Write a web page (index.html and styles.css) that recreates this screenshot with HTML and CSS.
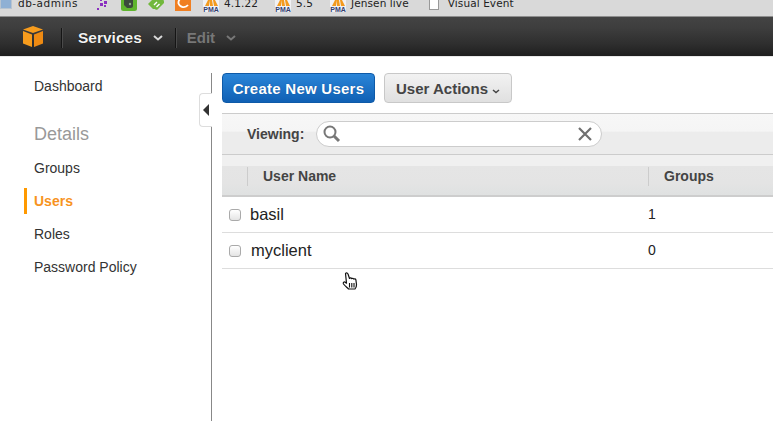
FILE: index.html
```html
<!DOCTYPE html>
<html lang="en">
<head>
<meta charset="utf-8">
<title>Users</title>
<link rel="stylesheet" href="styles.css">
</head>
<body>
<div class="bookmarks">
  <span class="bm-folder"></span><span class="bm bm-db">db-admins</span>
  <svg class="ic ic-dots" width="14" height="10" viewBox="0 0 14 10"><g fill="#8a2fc0"><rect x="0" y="8" width="2" height="2"/><rect x="3" y="3" width="3" height="3"/><rect x="7" y="1" width="3" height="3"/><rect x="3" y="0" width="2" height="1"/><rect x="7" y="5" width="2" height="2"/></g></svg>
  <svg class="ic ic-ever" width="16" height="11" viewBox="0 0 16 11"><rect x="0" y="-3" width="16" height="14" rx="2.500" fill="#5fb52e"/><path d="M3 0h9v5.500a2.500 2.500 0 0 1-2.500 2.500H6L3 5z" fill="#3b4a3c"/><circle cx="9" cy="4" r="1.200" fill="#8fa88c"/></svg>
  <svg class="ic ic-feed" width="16" height="10" viewBox="0 0 16 10"><path d="M0 4 5-1h8a3 3 0 0 1 3 3v1l-6 6a2 2 0 0 1-3 0H5z" fill="#72b83c"/><path d="M6 5l3-3M8.500 7l3-3" stroke="#fff" stroke-width="1.400"/></svg>
  <svg class="ic ic-c" width="16" height="11" viewBox="0 0 16 11"><rect width="16" height="11" fill="#f07f22"/><path d="M13 5a5.500 5.500 0 0 1-9.500-1.500A5.500 5.500 0 0 1 5 -1" fill="none" stroke="#fff" stroke-width="1.800"/></svg>
  <span class="pma pma-1"><svg width="16" height="12" viewBox="0 0 16 12"><rect width="16" height="12" fill="#f1f1f4"/><path d="M2 6 5 0h2L6 6zM7 6V0h2l1 6zM11 6 10 0h2l3 6z" fill="#f39a1e"/><text x="8" y="11.500" class="pma-text">PMA</text></svg><span class="bm">4.1.22</span></span>
  <span class="pma pma-2"><svg width="16" height="12" viewBox="0 0 16 12"><rect width="16" height="12" fill="#f1f1f4"/><path d="M2 6 5 0h2L6 6zM7 6V0h2l1 6zM11 6 10 0h2l3 6z" fill="#f39a1e"/><text x="8" y="11.500" class="pma-text">PMA</text></svg><span class="bm">5.5</span></span>
  <span class="pma pma-3"><svg width="16" height="12" viewBox="0 0 16 12"><rect width="16" height="12" fill="#f1f1f4"/><path d="M2 6 5 0h2L6 6zM7 6V0h2l1 6zM11 6 10 0h2l3 6z" fill="#f39a1e"/><text x="8" y="11.500" class="pma-text">PMA</text></svg><span class="bm">Jensen live</span></span>
  <span class="doc"><span class="doc-page"></span><span class="bm">Visual Event</span></span>
</div>

<nav class="topnav">
  <svg class="logo" width="22" height="22" viewBox="0 0 22 22"><path d="M11 0 21 3.500 11 7 1 3.500z" fill="#f79c1d"/><path d="M1 5 10 8.500V21L1 17.500z" fill="#f79c1d"/><path d="M21 5 12 8.500V21l9-3.500z" fill="#ee8a12"/></svg>
  <span class="nav-sep nav-sep-1"></span>
  <span class="nav-item nav-services">Services</span>
  <svg class="chev" width="10" height="6" viewBox="0 0 10 6"><path d="M1 1l4 3.500L9 1" fill="none" stroke="#d8d8d8" stroke-width="2"/></svg>
  <span class="nav-sep nav-sep-2"></span>
  <span class="nav-item nav-edit">Edit</span>
  <svg class="chev" width="10" height="6" viewBox="0 0 10 6"><path d="M1 1l4 3.500L9 1" fill="none" stroke="#777" stroke-width="2"/></svg>
</nav>

<div class="page">
  <aside class="sidebar">
    <a class="side-link side-dash">Dashboard</a>
    <div class="side-head">Details</div>
    <a class="side-link">Groups</a>
    <a class="side-link side-active">Users</a>
    <a class="side-link">Roles</a>
    <a class="side-link">Password Policy</a>
    <span class="collapse"><svg width="6" height="12" viewBox="0 0 6 12"><path d="M6 0v12L0 6z" fill="#333"/></svg></span>
  </aside>

  <main class="main">
    <div class="actions">
      <button class="btn btn-primary">Create New Users</button>
      <button class="btn btn-default">User Actions<svg class="btn-chev" width="8" height="5" viewBox="0 0 8 5"><path d="M1 1l3 2.500L7 1" fill="none" stroke="#444" stroke-width="1.500"/></svg></button>
    </div>
    <div class="filter">
      <label class="filter-label">Viewing:</label>
      <div class="search">
        <svg width="20" height="20" viewBox="0 0 20 20"><circle cx="8" cy="8" r="5.500" fill="none" stroke="#777" stroke-width="2"/><path d="M12 12l5 5" stroke="#777" stroke-width="3"/></svg>
        <svg width="14" height="14" viewBox="0 0 14 14"><path d="M1 1l12 12M13 1 1 13" stroke="#707070" stroke-width="2.200"/></svg>
      </div>
    </div>
    <div class="thead">
      <div class="th th-check"></div>
      <div class="th th-name">User Name</div>
      <div class="th th-groups">Groups</div>
    </div>
    <div class="row row-1">
      <input class="check" type="checkbox"><span class="cell-name">basil</span><span class="cell-groups">1</span>
    </div>
    <div class="row row-2">
      <input class="check" type="checkbox"><span class="cell-name">myclient</span><span class="cell-groups">0</span>
    </div>
  </main>
</div>

<svg class="cursor" width="16" height="19" viewBox="0 0 16 19"><path d="M3.500 1.500c.8-1 2.200-.6 2.500.5l1.500 4.500c.5-.8 1.800-.7 2.200.2.600-.7 1.800-.5 2.100.4.600-.5 1.900-.2 2.100.8l.6 4.600c.1 2-.7 3.500-1.500 4.500H6.500C5 15.500 3 14 1.500 12c-.8-1.200.4-2.500 1.700-1.800l1.300 1z" fill="#fff" stroke="#111" stroke-width="1.200" stroke-linejoin="round"/><path d="M7.500 11v4.500M9.800 11v4.500M12 11v4.500" stroke="#111" stroke-width="1.100"/></svg>
</body>
</html>
```
FILE: styles.css
```css
html, body {
  margin: 0;
  padding: 0;
}
body {
  width: 773px;
  height: 421px;
  overflow: hidden;
  position: relative;
  background: #fff;
  font-family: "Liberation Sans", Arial, sans-serif;
  color: #333;
}
.bookmarks {
  height: 16px;
  background: #d9d9d9;
  border-bottom: 1px solid #8e8e8e;
  display: flex;
  align-items: flex-start;
  overflow: hidden;
  color: #222;
}
.bm {
  font-family: "DejaVu Sans", sans-serif;
  font-size: 10.500px;
  line-height: 16px;
  position: relative;
  top: -5px;
  white-space: nowrap;
  letter-spacing: 0.100px;
}
.bm-folder {
  width: 12px;
  height: 9px;
  background: #8fb0d4;
  border: 1px solid #b8c4d0;
  border-top: 0;
  box-sizing: border-box;
  margin-right: 6px;
  flex: none;
}
.bm-db { width: 79px; letter-spacing: 0.500px; flex: none; }
.ic { flex: none; }
.ic-dots { margin-left: 0; }
.ic-ever { margin-left: 10px; }
.ic-feed { margin-left: 11px; }
.ic-c { margin-left: 11px; }
.pma {
  display: flex;
  gap: 5px;
  height: 16px;
  flex: none;
}
.pma svg { flex: none; }
.pma-1 { margin-left: 12px; }
.pma-2 { margin-left: 17px; }
.pma-3 { margin-left: 17px; }
.pma-text {
  font-family: "Liberation Sans", sans-serif;
  font-size: 7px;
  font-weight: 700;
  fill: #333f70;
  text-anchor: middle;
}
.doc {
  display: flex;
  gap: 9px;
  margin-left: 20px;
  flex: none;
}
.doc-page {
  width: 10px;
  height: 10px;
  background: #fff;
  border: 1px solid #999;
  border-top: 0;
  box-sizing: border-box;
  flex: none;
}
.topnav {
  height: 40px;
  box-sizing: border-box;
  background: linear-gradient(#444 0, #3d3d3d 30%, #2e2e2e 70%, #1e1e1e 100%);
  display: flex;
  align-items: center;
  padding: 2px 0 0 22px;
  border-bottom: 1px solid #e8e8e8;
}
.logo { flex: none; margin-top: -1px; }
.nav-sep {
  width: 1px;
  height: 20px;
  background: #151515;
  border-right: 1px solid #4a4a4a;
  flex: none;
}
.nav-sep-1 { margin-left: 17px; }
.nav-sep-2 { margin-left: 12px; }
.nav-item {
  font-size: 15.500px;
  font-weight: 700;
  flex: none;
}
.nav-services {
  color: #f2f2f2;
  margin-left: 15px;
  text-shadow: 0 0 1px #000;
}
.nav-services + .chev { margin-left: 11px; }
.nav-edit {
  color: #777;
  margin-left: 10px;
  font-size: 15px;
}
.nav-edit + .chev { margin-left: 11px; }
.page {
  display: flex;
  height: 364px;
}
.sidebar {
  width: 212px;
  box-sizing: border-box;
  border-right: 1px solid #888;
  margin-top: 16px;
  padding-top: 1px;
  position: relative;
  flex: none;
}
.side-link {
  display: block;
  height: 33px;
  line-height: 33px;
  padding-left: 34px;
  font-size: 14px;
  color: #333;
}
.side-dash { margin-bottom: 22px; height: 25px; line-height: 25px; }
.side-head {
  padding-left: 34px;
  font-size: 18px;
  color: #999;
  height: 26px;
  line-height: 26px;
  margin-bottom: 5px;
}
.side-active {
  color: #f7931e;
  font-weight: 700;
  height: 26px;
  line-height: 26px;
  margin: 3px 0 4px 24px;
  padding-left: 7px;
  border-left: 3px solid #ff9900;
}
.collapse {
  position: absolute;
  right: -1px;
  top: 20px;
  width: 13px;
  height: 34px;
  box-sizing: border-box;
  background: #fff;
  border: 1px solid #ddd;
  border-right: 0;
  border-radius: 4px 0 0 4px;
  display: flex;
  align-items: center;
  padding-left: 3px;
}
.main {
  flex: 1;
  min-width: 0;
  margin-left: 10px;
  padding-top: 16px;
}
.actions {
  display: flex;
  gap: 9px;
  height: 32px;
}
.btn {
  height: 30px;
  box-sizing: border-box;
  font-family: "Liberation Sans", Arial, sans-serif;
  font-size: 15px;
  font-weight: 700;
  border-radius: 4px;
  padding: 0;
}
.btn-primary {
  width: 153px;
  color: #fff;
  letter-spacing: 0.250px;
  text-shadow: 0 0 1px #0b4a90;
  background: linear-gradient(#2a85d8, #1060b4);
  border: 1px solid #0e5aa8;
}
.btn-default {
  width: 128px;
  color: #444;
  background: linear-gradient(#f2f2f2, #e0e0e0);
  border: 1px solid #c8c8c8;
}
.btn-chev { margin-left: 4px; vertical-align: 0; }
.filter {
  height: 42px;
  box-sizing: border-box;
  margin-top: 8px;
  padding: 0 0 1px 25px;
  border-top: 1px solid #ccc;
  border-bottom: 1px solid #ccc;
  background: linear-gradient(#f7f7f7 0, #f5f5f5 43%, #ececec 45%, #ececec 100%);
  display: flex;
  align-items: center;
}
.filter-label {
  font-size: 14px;
  font-weight: 700;
  color: #444;
  width: 69px;
  flex: none;
}
.search {
  width: 286px;
  height: 26px;
  box-sizing: border-box;
  background: #fff;
  border: 1px solid #ccc;
  border-radius: 13px;
  display: flex;
  align-items: center;
  justify-content: space-between;
  padding: 0 9px 0 5px;
}
.thead {
  height: 42px;
  box-sizing: border-box;
  background: linear-gradient(#f0f0f0 0, #f0f0f0 27%, #e5e5e5 28%, #e4e4e4 70%, #dfe1e1 100%);
  border-bottom: 2px solid #cdcdcd;
  display: flex;
  align-items: center;
  padding-top: 3px;
}
.th {
  font-size: 14px;
  font-weight: 700;
  color: #444;
  height: 19px;
  line-height: 19px;
  box-sizing: border-box;
  flex: none;
}
.th-check { width: 25px; }
.th-name {
  width: 401px;
  padding-left: 15px;
  border-left: 1px solid #ccc;
}
.th-groups {
  padding-left: 15px;
  border-left: 1px solid #ccc;
}
.row {
  height: 36px;
  box-sizing: border-box;
  border-bottom: 1px solid #ddd;
  display: flex;
  align-items: center;
  color: #222;
  padding-bottom: 1px;
}
.check {
  appearance: none;
  width: 12px;
  height: 12px;
  margin: 1px 0 0 7px;
  background: linear-gradient(#fff, #e4e4e4);
  border: 1px solid #aaa;
  border-radius: 3px;
  flex: none;
}
.cell-name { width: 398px; margin-left: 9px; flex: none; font-size: 16.500px; }
.row-2 .cell-name { margin-left: 10px; width: 397px; }
.cell-groups { font-size: 14px; }
.cursor {
  position: absolute;
  left: 342px;
  top: 272px;
}
```
